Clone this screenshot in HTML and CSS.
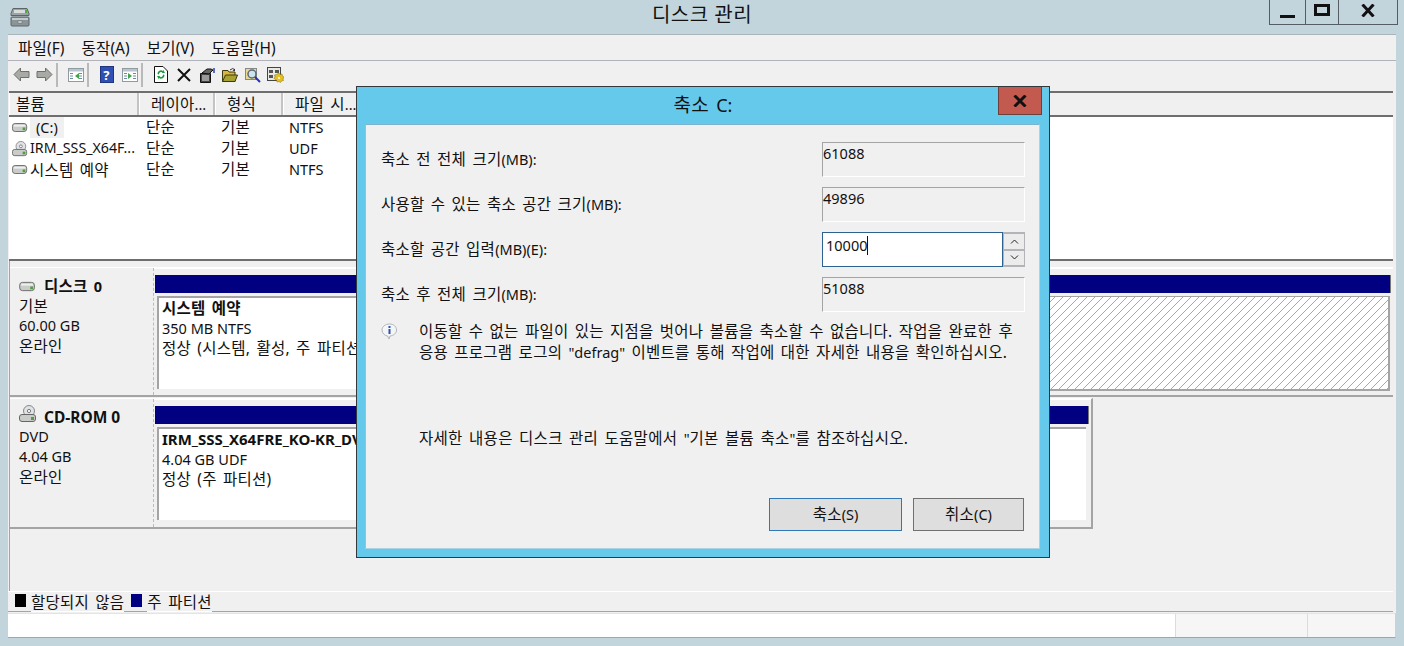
FILE: index.html
```html
<!DOCTYPE html>
<html lang="ko">
<head>
    <meta charset="UTF-8">
    <title>디스크 관리</title>
    <link rel="stylesheet" href="styles.css">
</head>
<body>
    <svg class="defs" width="0" height="0">
        <symbol id="disk" viewBox="0 0 18 12">
            <rect x="0.5" y="1.5" width="16" height="9" rx="3" fill="#c9ccc8" stroke="#666"/>
            <rect x="2" y="3" width="13" height="2" fill="#eef0ee"/>
            <rect x="12" y="6" width="3" height="3" fill="#4fa03c"/>
        </symbol>
        <symbol id="cddisk" viewBox="0 0 18 18">
            <circle cx="10" cy="6" r="5.5" fill="#dfe3e6" stroke="#888"/>
            <circle cx="10" cy="6" r="1.6" fill="#fff" stroke="#777"/>
            <rect x="0.5" y="9.5" width="16" height="7" rx="2.5" fill="#c9ccc8" stroke="#666"/>
            <rect x="12" y="12" width="3" height="3" fill="#4fa03c"/>
        </symbol>
        <symbol id="pane" viewBox="0 0 16 14">
            <rect x="0.5" y="0.5" width="15" height="13" fill="#fff" stroke="#8f9aa3"/>
            <rect x="1" y="1" width="14" height="2.5" fill="#b9c4cc"/>
            <path d="M2 5h3v1H2zM2 7.5h3v1H2zM2 10h3v1H2zM11 5h3v1h-3zM11 7.5h3v1h-3zM11 10h3v1h-3z" fill="#6f8aa0"/>
        </symbol>
    </svg>

    <header class="titlebar">
        <svg class="app-icon" width="20" height="20" viewBox="0 0 20 20">
            <path d="M3 1.5h14l2 5v2H1v-2z" fill="#9aa3a6" stroke="#5d6568"/>
            <rect x="4" y="3" width="11" height="3" fill="#d8dcdc"/>
            <rect x="15" y="3" width="2" height="3" fill="#58a83f"/>
            <rect x="1" y="10" width="18" height="9" rx="1" fill="#8b9497" stroke="#5d6568"/>
            <rect x="2" y="11" width="16" height="2" fill="#c4cacb"/>
            <rect x="8" y="14" width="4" height="2" fill="#e6e8e8" stroke="#5d6568" stroke-width="0.5"/>
        </svg>
        <div class="title">디스크 관리</div>
        <div class="win-controls">
            <div class="ctl ctl-min"><span class="min-glyph"></span></div>
            <div class="ctl ctl-max"><span class="max-glyph"></span></div>
            <div class="ctl ctl-close">
                <svg width="14" height="13" viewBox="0 0 14 13"><path d="M1.500 0.500L12.500 12.500M12.500 0.500L1.500 12.500" stroke="#111" stroke-width="3"/></svg>
            </div>
        </div>
    </header>

    <div class="window">
        <nav class="menubar">
            <span>파일<span class="en">(F)</span></span>
            <span>동작<span class="en">(A)</span></span>
            <span>보기<span class="en">(V)</span></span>
            <span>도움말<span class="en">(H)</span></span>
        </nav>

        <div class="toolbar">
            <div class="tool">
                <svg width="17" height="15" viewBox="0 0 17 15"><path d="M7.500 1L1 7.500 7.500 14v-3.500H16v-6H7.500z" fill="#a8aaa6" stroke="#6e706c"/></svg>
            </div>
            <div class="tool">
                <svg width="17" height="15" viewBox="0 0 17 15"><path d="M9.500 1L16 7.500 9.500 14v-3.500H1v-6h8.500z" fill="#a8aaa6" stroke="#6e706c"/></svg>
            </div>
            <div class="tool-sep"></div>
            <div class="tool">
                <svg width="16" height="14"><use href="#pane"/><path d="M11 5v6L7 8z" fill="#3fa34a"/></svg>
            </div>
            <div class="tool-sep"></div>
            <div class="tool">
                <div class="help-icon">?</div>
            </div>
            <div class="tool">
                <svg width="16" height="14"><use href="#pane"/><path d="M6 5v6l4-3z" fill="#3fa34a"/></svg>
            </div>
            <div class="tool-sep"></div>
            <div class="tool">
                <svg width="14" height="17" viewBox="0 0 14 17">
                    <path d="M0.500 0.500H9L13.500 5v11.500H0.500z" fill="#fff" stroke="#111"/>
                    <path d="M3.500 8a3.500 3.500 0 0 1 5.500-3V3.500l2 3.500H7.500L8.500 6.300A2.300 2.300 0 0 0 5 8.500z" fill="#1d9a3a"/>
                    <path d="M10.500 9a3.500 3.500 0 0 1-5.500 3v1.500L3 10h3.500L5.500 10.700A2.300 2.300 0 0 0 9 8.500z" fill="#1d9a3a"/>
                </svg>
            </div>
            <div class="tool">
                <svg width="14" height="14" viewBox="0 0 14 14"><path d="M1 1l12 12M13 1L1 13" stroke="#111" stroke-width="2"/></svg>
            </div>
            <div class="tool">
                <svg width="16" height="16" viewBox="0 0 16 16">
                    <path d="M1.500 6.500H11.500V15.500H1.500z" fill="#444" stroke="#111"/>
                    <path d="M3 9h7M3 11h7M3 13h7" stroke="#eee"/>
                    <path d="M3 6L8 2h4l2 1-4 4z" fill="#666" stroke="#111"/>
                    <path d="M15 1v5" stroke="#2a3fb0" stroke-width="1.500"/>
                </svg>
            </div>
            <div class="tool">
                <svg width="16" height="15" viewBox="0 0 16 15">
                    <path d="M0.500 3.500H6L7 5H13V14.500H0.500z" fill="#d8b73a" stroke="#3d3a10"/>
                    <path d="M0.500 14.500L3.500 8H15.500L13 14.500z" fill="#a8a030" stroke="#3d3a10"/>
                    <path d="M8 3Q11 0 13 3" fill="none" stroke="#333"/>
                    <path d="M13 1.500V4h-2.500z" fill="#333"/>
                </svg>
            </div>
            <div class="tool">
                <svg width="16" height="16" viewBox="0 0 16 16">
                    <rect x="0.500" y="1.500" width="11" height="11" fill="#e8d890" stroke="#888"/>
                    <circle cx="7" cy="7" r="4" fill="#cfe2f0" stroke="#5a6a78" stroke-width="1.500"/>
                    <path d="M10 10l5 5" stroke="#2332b8" stroke-width="2"/>
                </svg>
            </div>
            <div class="tool">
                <svg width="17" height="16" viewBox="0 0 17 16">
                    <rect x="0.500" y="0.500" width="13" height="13" fill="#e8e8e4" stroke="#444"/>
                    <path d="M2 3h4v3H2zM8 3h4v3H8zM2 8h4v3H2z" fill="#555"/>
                    <path d="M12 6l1 1.500 2-.5.500 2 1.500 1-1 2 .5 1.500-2 .500-1 1.500-1.500-1-2 .5-.5-2L7 11.500l1-1.500-.5-2 2-.5z" fill="#e4c020" stroke="#7a6a10" stroke-width="0.500"/>
                    <circle cx="12" cy="11" r="1" fill="#fff"/>
                </svg>
            </div>
        </div>

        <section class="volumes">
            <div class="vol-row vol-head">
                <div class="vol-h">볼륨</div>
                <div class="vol-h">레이아<span class="en">...</span></div>
                <div class="vol-h">형식</div>
                <div class="vol-h vol-h-wide">파일 시<span class="en">...</span></div>
            </div>
            <div class="vol-row">
                <div class="vol-name">
                    <svg class="vol-icon" width="16" height="11"><use href="#disk"/></svg>
                    <span class="vol-selected en">(C:)</span>
                </div>
                <div class="vol-cell">단순</div>
                <div class="vol-cell">기본</div>
                <div class="vol-cell en">NTFS</div>
            </div>
            <div class="vol-row">
                <div class="vol-name">
                    <svg class="vol-icon" width="16" height="16"><use href="#cddisk"/></svg>
                    <span class="en vol-long">IRM_SSS_X64F...</span>
                </div>
                <div class="vol-cell">단순</div>
                <div class="vol-cell">기본</div>
                <div class="vol-cell en">UDF</div>
            </div>
            <div class="vol-row">
                <div class="vol-name">
                    <svg class="vol-icon" width="16" height="11"><use href="#disk"/></svg>
                    <span>시스템 예약</span>
                </div>
                <div class="vol-cell">단순</div>
                <div class="vol-cell">기본</div>
                <div class="vol-cell en">NTFS</div>
            </div>
        </section>

        <section class="disks">
            <div class="disk">
                <div class="disk-info">
                    <div class="disk-name">
                        <svg width="17" height="11"><use href="#disk"/></svg>
                        <b>디스크 <span class="en">0</span></b>
                    </div>
                    <div>기본</div>
                    <div class="en">60.00 GB</div>
                    <div>온라인</div>
                </div>
                <div class="disk-map">
                    <div class="map-bar"></div>
                    <div class="map-parts">
                        <div class="part">
                            <b>시스템 예약</b>
                            <div class="en">350 MB NTFS</div>
                            <div>정상 (시스템, 활성, 주 파티션)</div>
                        </div>
                        <div class="part-free"></div>
                    </div>
                </div>
            </div>
            <div class="disk disk-cd">
                <div class="disk-info">
                    <div class="disk-name">
                        <svg class="cd-icon" width="18" height="18"><use href="#cddisk"/></svg>
                        <b class="en">CD-ROM 0</b>
                    </div>
                    <div class="en">DVD</div>
                    <div class="en">4.04 GB</div>
                    <div>온라인</div>
                </div>
                <div class="disk-map">
                    <div class="map-bar"></div>
                    <div class="map-parts">
                        <div class="part part-full">
                            <b class="en">IRM_SSS_X64FRE_KO-KR_DV5</b>
                            <div class="en">4.04 GB UDF</div>
                            <div>정상 (주 파티션)</div>
                        </div>
                    </div>
                </div>
            </div>
        </section>

        <div class="legend">
            <span class="swatch swatch-black"></span><span class="legend-text">할당되지 않음</span>
            <span class="swatch swatch-navy"></span><span class="legend-text">주 파티션</span>
        </div>

        <footer class="statusbar">
            <div class="status-main"></div>
            <div class="status-a"></div>
            <div class="status-b"></div>
        </footer>
    </div>

    <div class="dialog">
        <div class="dialog-title">축소 <span class="en">C:</span></div>
        <div class="dialog-close">
            <svg width="14" height="12" viewBox="0 0 14 12"><path d="M1.500 0.500L12.500 11.500M12.500 0.500L1.500 11.500" stroke="#111" stroke-width="3"/></svg>
        </div>
        <div class="dialog-body">
            <div class="field">
                <label>축소 전 전체 크기<span class="en">(MB):</span></label>
                <div class="readout en">61088</div>
            </div>
            <div class="field">
                <label>사용할 수 있는 축소 공간 크기<span class="en">(MB):</span></label>
                <div class="readout en">49896</div>
            </div>
            <div class="field">
                <label>축소할 공간 입력<span class="en">(MB)(E):</span></label>
                <div class="spin">
                    <div class="spin-input en">10000<span class="caret"></span></div>
                    <div class="spin-btns">
                        <div class="spin-btn">
                            <svg width="9" height="5" viewBox="0 0 9 5"><path d="M1 4.500L4.500 1 8 4.500" fill="none" stroke="#222"/></svg>
                        </div>
                        <div class="spin-btn">
                            <svg width="9" height="5" viewBox="0 0 9 5"><path d="M1 0.500L4.500 4 8 0.500" fill="none" stroke="#222"/></svg>
                        </div>
                    </div>
                </div>
            </div>
            <div class="field">
                <label>축소 후 전체 크기<span class="en">(MB):</span></label>
                <div class="readout en">51088</div>
            </div>
            <div class="note">
                <svg class="note-icon" width="17" height="17" viewBox="0 0 17 17">
                    <path d="M8.500 1C4.400 1 1 3.600 1 7s3 5.800 5.500 6l1.500 3 1-3c3.500-.4 6.500-2.600 6.500-6S12.600 1 8.500 1z" fill="#f4f5f7" stroke="#b0b4ba"/>
                    <rect x="7.500" y="3" width="2" height="2" fill="#2c55b0"/>
                    <rect x="7.500" y="6" width="2" height="5" fill="#2c55b0"/>
                </svg>
                <p>이동할 수 없는 파일이 있는 지점을 벗어나 볼륨을 축소할 수 없습니다. 작업을 완료한 후<br>응용 프로그램 로그의 <span class="en">"defrag"</span> 이벤트를 통해 작업에 대한 자세한 내용을 확인하십시오.</p>
            </div>
            <p class="help-line">자세한 내용은 디스크 관리 도움말에서 <span class="en">"</span>기본 볼륨 축소<span class="en">"</span>를 참조하십시오.</p>
            <div class="dialog-actions">
                <button class="btn btn-default">축소<span class="en">(S)</span></button>
                <button class="btn">취소<span class="en">(C)</span></button>
            </div>
        </div>
    </div>
</body>
</html>
```

FILE: styles.css
```css
* {
    box-sizing: border-box;
}
body {
    margin: 0;
    width: 1404px;
    height: 646px;
    overflow: hidden;
    position: relative;
    background-color: #c3d5dc;
    color: #111;
    font-family: "Noto Sans", "Noto Sans CJK KR", sans-serif;
    font-size: 15.5px;
    letter-spacing: 0.25px;
    word-spacing: 2px;
    line-height: 20px;
}
b {
    font-weight: 700;
}
/* latin runs are set smaller than the hangul around them */
.en {
    font-size: 14.5px;
    letter-spacing: 0;
    word-spacing: 0;
    line-height: 1;
}
.defs {
    position: absolute;
}

/* title bar */
.titlebar {
    height: 34px;
    display: flex;
    justify-content: center;
    position: relative;
}
.app-icon {
    position: absolute;
    left: 10px;
    top: 7px;
}
.title {
    font-size: 20px;
    line-height: 30px;
    letter-spacing: 0.5px;
    word-spacing: 0;
}
.win-controls {
    position: absolute;
    left: 1269px;
    top: 0;
    height: 25px;
    display: flex;
    border: 1px solid #555c63;
    border-top: none;
}
.ctl {
    display: flex;
    align-items: center;
    justify-content: center;
    border-right: 1px solid #555c63;
}
.ctl-min {
    width: 36px;
}
.ctl-max {
    width: 33px;
}
.ctl-close {
    width: 58px;
    border-right: none;
    padding-bottom: 4px;
}
.min-glyph {
    width: 15px;
    height: 3px;
    margin-top: 9px;
    background-color: #111;
}
.max-glyph {
    width: 16px;
    height: 12px;
    margin-bottom: 4px;
    border: 3px solid #111;
}

/* main window */
.window {
    width: 1388px;
    height: 604px;
    margin-left: 8px;
    display: flex;
    flex-direction: column;
    background-color: #f0f0f0;
    border-top: 1px solid #a9b5bb;
}
.menubar {
    height: 26px;
    flex: none;
    display: flex;
    gap: 17px;
    padding: 3px 0 0 10px;
    border-bottom: 1px solid #b0b4ba;
}
.menubar .en {
    font-size: 15.5px;
}
.toolbar {
    height: 30px;
    flex: none;
    display: flex;
    align-items: center;
    padding: 0 0 3px 2px;
}
.tool {
    width: 23px;
    display: flex;
    justify-content: center;
}
.tool-sep {
    width: 2px;
    height: 24px;
    margin-right: 6px;
    background-color: #b9b9b9;
}
.help-icon {
    width: 14px;
    height: 17px;
    color: #fff;
    font-size: 13px;
    font-weight: 700;
    line-height: 16px;
    text-align: center;
    background-color: #2f4fb5;
    border: 1px solid #20357e;
}

/* volume list */
.volumes {
    height: 170px;
    flex: none;
    margin-left: 1px;
    margin-right: 3px;
    background-color: #fff;
    border-top: 2px solid #6e6e6e;
    border-bottom: 2px solid #6e6e6e;
}
.vol-row {
    display: grid;
    grid-template-columns: 130px 76px 68px 1fr;
    height: 21px;
    line-height: 20px;
}
.vol-head {
    height: 24px;
    line-height: 22px;
    background-color: #f0f0f0;
    border-bottom: 2px solid #6e6e6e;
}
.vol-h {
    border-right: 2px solid #c4c4c4;
    border-left: 1px solid #fff;
    padding-left: 6px;
}
.vol-h + .vol-h {
    padding-left: 11px;
}
.vol-h-wide {
    border-right: none;
}
.vol-name {
    display: flex;
    align-items: center;
    padding-left: 3px;
    overflow: hidden;
    white-space: nowrap;
}
.vol-icon {
    flex: none;
    margin-right: 2px;
}
.vol-selected {
    height: 21px;
    padding: 3px 6px 0 6px;
    background-color: #f0f0f0;
}
.vol-long {
    font-size: 14.2px;
}
.vol-cell {
    padding-left: 7px;
}
.vol-cell + .vol-cell {
    padding-left: 6px;
}
.vol-cell.en {
    line-height: 20px;
}

/* disk map */
.disks {
    flex: 1;
    min-height: 0;
    margin-left: 1px;
    padding: 6px 1px 0 0;
    display: flex;
    flex-direction: column;
    gap: 1px;
    border-left: 1px solid #a4a4a4;
}
.disk {
    height: 130px;
    display: flex;
    border-bottom: 2px solid #a4a4a4;
    border-top: 1px solid #fff;
    margin-right: 2px;
}
.disk-cd {
    height: 131px;
    width: 1083px;
    border-right: 2px solid #a4a4a4;
}
.disk-info {
    width: 144px;
    flex: none;
    padding: 8px 0 0 9px;
    border-right: 1px dashed #bbb;
}
.disk-info > .en {
    line-height: 19px;
    margin-bottom: 1px;
}
.disk-name {
    display: flex;
    align-items: center;
    gap: 8px;
}
.disk-name .cd-icon {
    margin-top: -7px;
    margin-right: -1px;
}
.disk-name b.en {
    font-size: 15.5px;
    line-height: 20px;
}
.disk-map {
    flex: 1;
    min-width: 0;
    padding: 6px 2px 6px 1px;
    border-top: 1px solid #fff;
}
.map-bar {
    height: 18px;
    background-color: #000080;
    border-right: 1px solid #777;
}
.map-parts {
    height: 98px;
    display: flex;
    padding-top: 3px;
    background-color: #f0f0f0;
}
.part {
    width: 700px;
    height: 93px;
    padding: 0 0 0 3px;
    margin-left: 2px;
    background-color: #fff;
    border-top: 2px solid #a4a4a4;
    border-left: 2px solid #a4a4a4;
    overflow: hidden;
    white-space: nowrap;
}
.part .en {
    line-height: 20px;
}
.part-full {
    flex: 1;
    margin-right: 3px;
}
.part-full b.en {
    font-size: 15px;
}
.part-free {
    flex: 1;
    height: 95px;
    background-color: #fff;
    background-image: repeating-linear-gradient(-45deg, #a8a8a8 0 1px, #fff 1px 5.66px);
    border: 2px solid #a4a4a4;
    border-top-width: 1px;
    border-left: none;
    margin-right: 1px;
}

/* legend + status */
.legend {
    height: 21px;
    flex: none;
    display: flex;
    align-items: center;
    padding-left: 7px;
    margin-right: 3px;
    border-top: 1px solid #fff;
    border-bottom: 1px solid #a4a4a4;
}
.legend-text {
    height: 20px;
    margin-bottom: -1px;
    background-color: #f0f0f0;
    border-bottom: 1px solid #fff;
}
.swatch {
    width: 11px;
    height: 13px;
    margin-right: 5px;
    margin-bottom: 3px;
}
.swatch-black {
    background-color: #000;
}
.swatch-navy {
    background-color: #000080;
    margin-left: 7px;
}
.statusbar {
    height: 25px;
    flex: none;
    margin-top: 1px;
    display: flex;
    background-color: #fff;
    border-bottom: 1px solid #a4a4a4;
    border-right: 1px solid #d0d0d0;
    border-top: 1px solid #e4e4e4;
}
.status-main {
    flex: 1;
}
.status-a {
    width: 132px;
    background-color: #f6f6f6;
    border-left: 1px solid #dcdcdc;
}
.status-b {
    width: 88px;
    background-color: #f6f6f6;
    border-left: 1px solid #dcdcdc;
}

/* shrink dialog */
.dialog {
    position: absolute;
    left: 356px;
    top: 86px;
    width: 694px;
    height: 472px;
    padding: 37px 9px 8px 8px;
    background-color: #65c9ec;
    border: 1px solid #33383b;
}
.dialog-title {
    position: absolute;
    left: 0;
    right: 0;
    top: 5px;
    text-align: center;
    font-size: 19px;
    line-height: 26px;
}
.dialog-title .en {
    font-size: 18px;
}
.dialog-close {
    position: absolute;
    left: 641px;
    top: 0;
    width: 44px;
    height: 28px;
    display: flex;
    align-items: center;
    justify-content: center;
    background-color: #c25a4f;
    border: 1px solid #6b3f3a;
    border-top: none;
}
.dialog-body {
    height: 100%;
    display: flex;
    flex-direction: column;
    gap: 10px;
    padding: 17px 14px 17px 15px;
    background-color: #f0f0f0;
    border-top: 1px solid #7fb2cc;
    border-left: 1px solid #8fc4dc;
    border-right: 1px solid #a9d4e4;
    border-bottom: 1px solid #a9d4e4;
}
.field {
    height: 35px;
    flex: none;
    display: flex;
    justify-content: space-between;
}
.field label {
    padding-top: 7px;
}
.readout {
    width: 203px;
    height: 35px;
    line-height: 20px;
    border-top: 1px solid #a4a4a4;
    border-left: 1px solid #a4a4a4;
    border-right: 1px solid #fff;
    border-bottom: 1px solid #fff;
}
.spin {
    width: 203px;
    display: flex;
}
.spin-input {
    width: 181px;
    padding: 1px 0 0 3px;
    line-height: 22px;
    background-color: #fff;
    border: 1px solid #2d618f;
}
.caret {
    display: inline-block;
    width: 1px;
    height: 19px;
    vertical-align: -4px;
    background-color: #111;
}
.spin-btns {
    width: 22px;
    display: flex;
    flex-direction: column;
    gap: 2px;
    padding: 0;
    background-color: #b4b4b8;
    border: 2px solid #b4b4b8;
    border-left-width: 1px;
    border-right-width: 1px;
}
.spin-btn {
    flex: 1;
    display: flex;
    align-items: center;
    justify-content: center;
    background-color: #ececec;
}
.note {
    margin-top: -1px;
    display: flex;
}
.note-icon {
    flex: none;
    margin-top: 2px;
}
.note p {
    margin: 0 0 0 21px;
    line-height: 21px;
    white-space: nowrap;
}
.help-line {
    margin: 55px 0 0 38px;
    line-height: 21px;
    letter-spacing: 0.3px;
}
.dialog-actions {
    margin-top: auto;
    display: flex;
    justify-content: flex-end;
    gap: 11px;
    padding-right: 1px;
}
.btn {
    width: 111px;
    height: 33px;
    padding: 0 0 2px;
    font: inherit;
    letter-spacing: inherit;
    color: #111;
    background-color: #dedede;
    border: 1px solid #707070;
}
.btn-default {
    width: 133px;
    border-color: #2f77b5;
}
```
